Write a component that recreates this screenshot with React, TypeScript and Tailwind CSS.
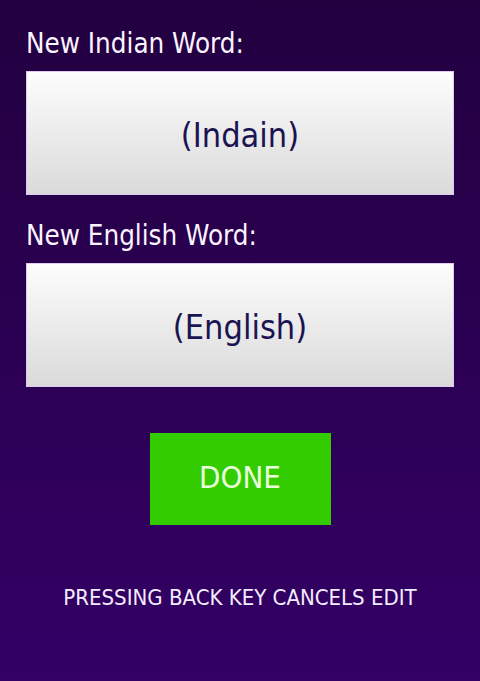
const font = "font-['DejaVu_Sans_Condensed','DejaVu_Sans',sans-serif] font-stretch-condensed";

function WordField({ label, placeholder }: { label: string; placeholder: string }) {
  return (
    <div className="flex flex-col">
      <label className={`${font} text-[27.5px] leading-[32px] text-[#fbf3ff]`}>{label}</label>
      <div className="mt-[12px] h-[124px] flex items-center justify-center border border-[#dccbec] bg-gradient-to-b from-[#fdfdfd] to-[#dadada]">
        <span className={`${font} text-[34px] text-[#1b1452] translate-y-[2px]`}>{placeholder}</span>
      </div>
    </div>
  );
}

export default function App() {
  return (
    <div className="h-[681px] w-full bg-gradient-to-b from-[#220040] to-[#330066] px-[26px] pt-[27px] flex flex-col">
      <div className="flex flex-col gap-[24px]">
        <WordField label="New Indian Word:" placeholder="(Indain)" />
        <WordField label="New English Word:" placeholder="(English)" />
      </div>
      <div className="flex justify-center mt-[46px]">
        <button className="w-[181px] h-[92px] bg-[#33cc00] flex items-center justify-center">
          <span className={`${font} text-[31px] text-[#e9ffde] -translate-y-[2px]`}>DONE</span>
        </button>
      </div>
      <p className={`${font} mt-[56px] text-center text-[22px] text-[#f4ecff]`}>
        PRESSING BACK KEY CANCELS EDIT
      </p>
    </div>
  );
}
